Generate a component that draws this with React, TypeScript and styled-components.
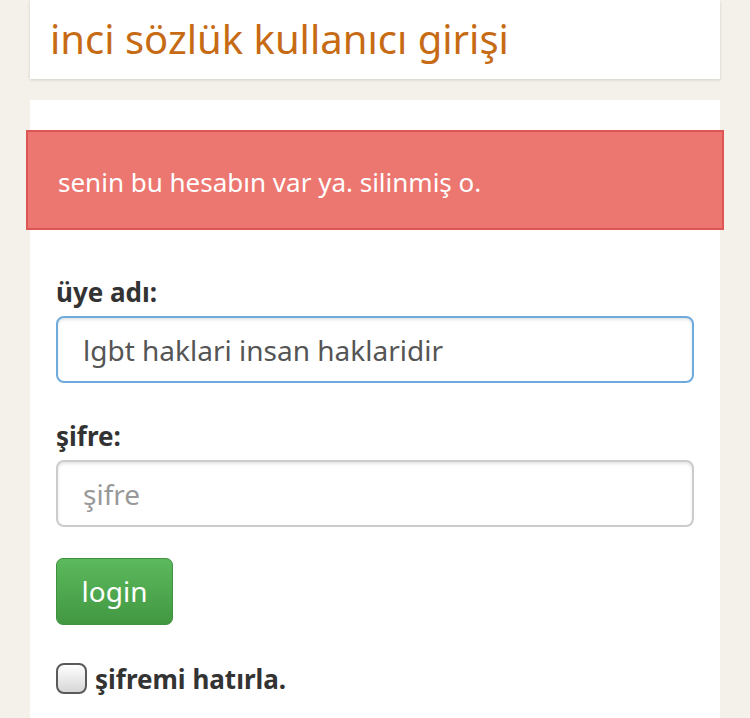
import styled, { createGlobalStyle } from "styled-components";

const GlobalStyle = createGlobalStyle`
  html, body {
    margin: 0;
    padding: 0;
    background-color: #f3f1e9;
    font-family: "Noto Sans", "Open Sans", sans-serif;
  }
`;

function App() {
  return (
    <>
      <GlobalStyle />
      <Page>
        <HeaderCard>
          <Title>inci sözlük kullanıcı girişi</Title>
        </HeaderCard>

        <FormCard>
          <Alert>senin bu hesabın var ya. silinmiş o.</Alert>

          <FormGroup>
            <Label htmlFor="username">üye adı:</Label>
            <Input id="username" defaultValue="lgbt haklari insan haklaridir" $focused />
          </FormGroup>

          <FormGroup>
            <Label htmlFor="password">şifre:</Label>
            <Input id="password" type="password" placeholder="şifre" />
          </FormGroup>

          <LoginButton type="button">login</LoginButton>

          <RememberRow>
            <Checkbox type="checkbox" />
            <RememberText>şifremi hatırla.</RememberText>
          </RememberRow>
        </FormCard>
      </Page>
    </>
  );
}

export default App;

const Page = styled.div`
  padding: 0 30px;
  display: flex;
  flex-direction: column;
  gap: 21px;
`;

const HeaderCard = styled.div`
  background-color: #fff;
  height: 79px;
  box-shadow: 0 1px 3px rgba(0, 0, 0, 0.14);
  padding: 0 20px;
  box-sizing: border-box;
`;

const Title = styled.h1`
  margin: 0;
  font-weight: 400;
  font-size: 40px;
  line-height: 78px;
  color: #c66b14;
`;

const FormCard = styled.div`
  background-color: #fff;
  padding: 30px 26px 40px;
  min-height: 620px;
  box-sizing: border-box;
`;

const Alert = styled.div`
  margin: 0 -30px;
  height: 100px;
  box-sizing: border-box;
  background-color: #ec7770;
  border: 2px solid #de5555;
  color: #fff;
  font-size: 26px;
  padding: 3px 30px 0;
  display: flex;
  align-items: center;
`;

const FormGroup = styled.div`
  display: flex;
  flex-direction: column;
  gap: 7px;
  margin-top: 45px;

  & + & {
    margin-top: 36px;
  }
`;

const Label = styled.label`
  font-size: 26px;
  font-weight: 700;
  line-height: 34px;
  color: #333;
`;

const Input = styled.input<{ $focused?: boolean }>`
  height: 67px;
  width: 100%;
  box-sizing: border-box;
  border: 2px solid ${(p) => (p.$focused ? "#6eaadc" : "#cccccc")};
  border-radius: 8px;
  padding: 0 25px;
  font-family: "Noto Sans", "Open Sans", sans-serif;
  font-size: 28px;
  color: #555;
  background-color: #fff;
  box-shadow: inset 0 2px 3px rgba(0, 0, 0, 0.1);
  outline: none;

  &::placeholder {
    color: #999;
  }
`;

const LoginButton = styled.button`
  margin-top: 31px;
  align-self: flex-start;
  width: 117px;
  height: 67px;
  border: 1px solid #3f9140;
  border-radius: 7px;
  background-image: linear-gradient(to bottom, #5db95d 0%, #419841 100%);
  color: #fff;
  font-family: "Noto Sans", "Open Sans", sans-serif;
  font-size: 28px;
  padding: 0 0 2px;
  cursor: pointer;
`;

const RememberRow = styled.label`
  margin-top: 36px;
  display: flex;
  align-items: center;
  gap: 8px;
`;

const Checkbox = styled.input`
  appearance: none;
  margin: 0 0 2px;
  width: 31px;
  height: 31px;
  border: 2px solid #5a5a5a;
  border-radius: 8px;
  background-image: linear-gradient(to bottom, #ffffff 0%, #d6d6d6 100%);
  box-sizing: border-box;
`;

const RememberText = styled.span`
  font-size: 26px;
  font-weight: 700;
  color: #333;
`;
